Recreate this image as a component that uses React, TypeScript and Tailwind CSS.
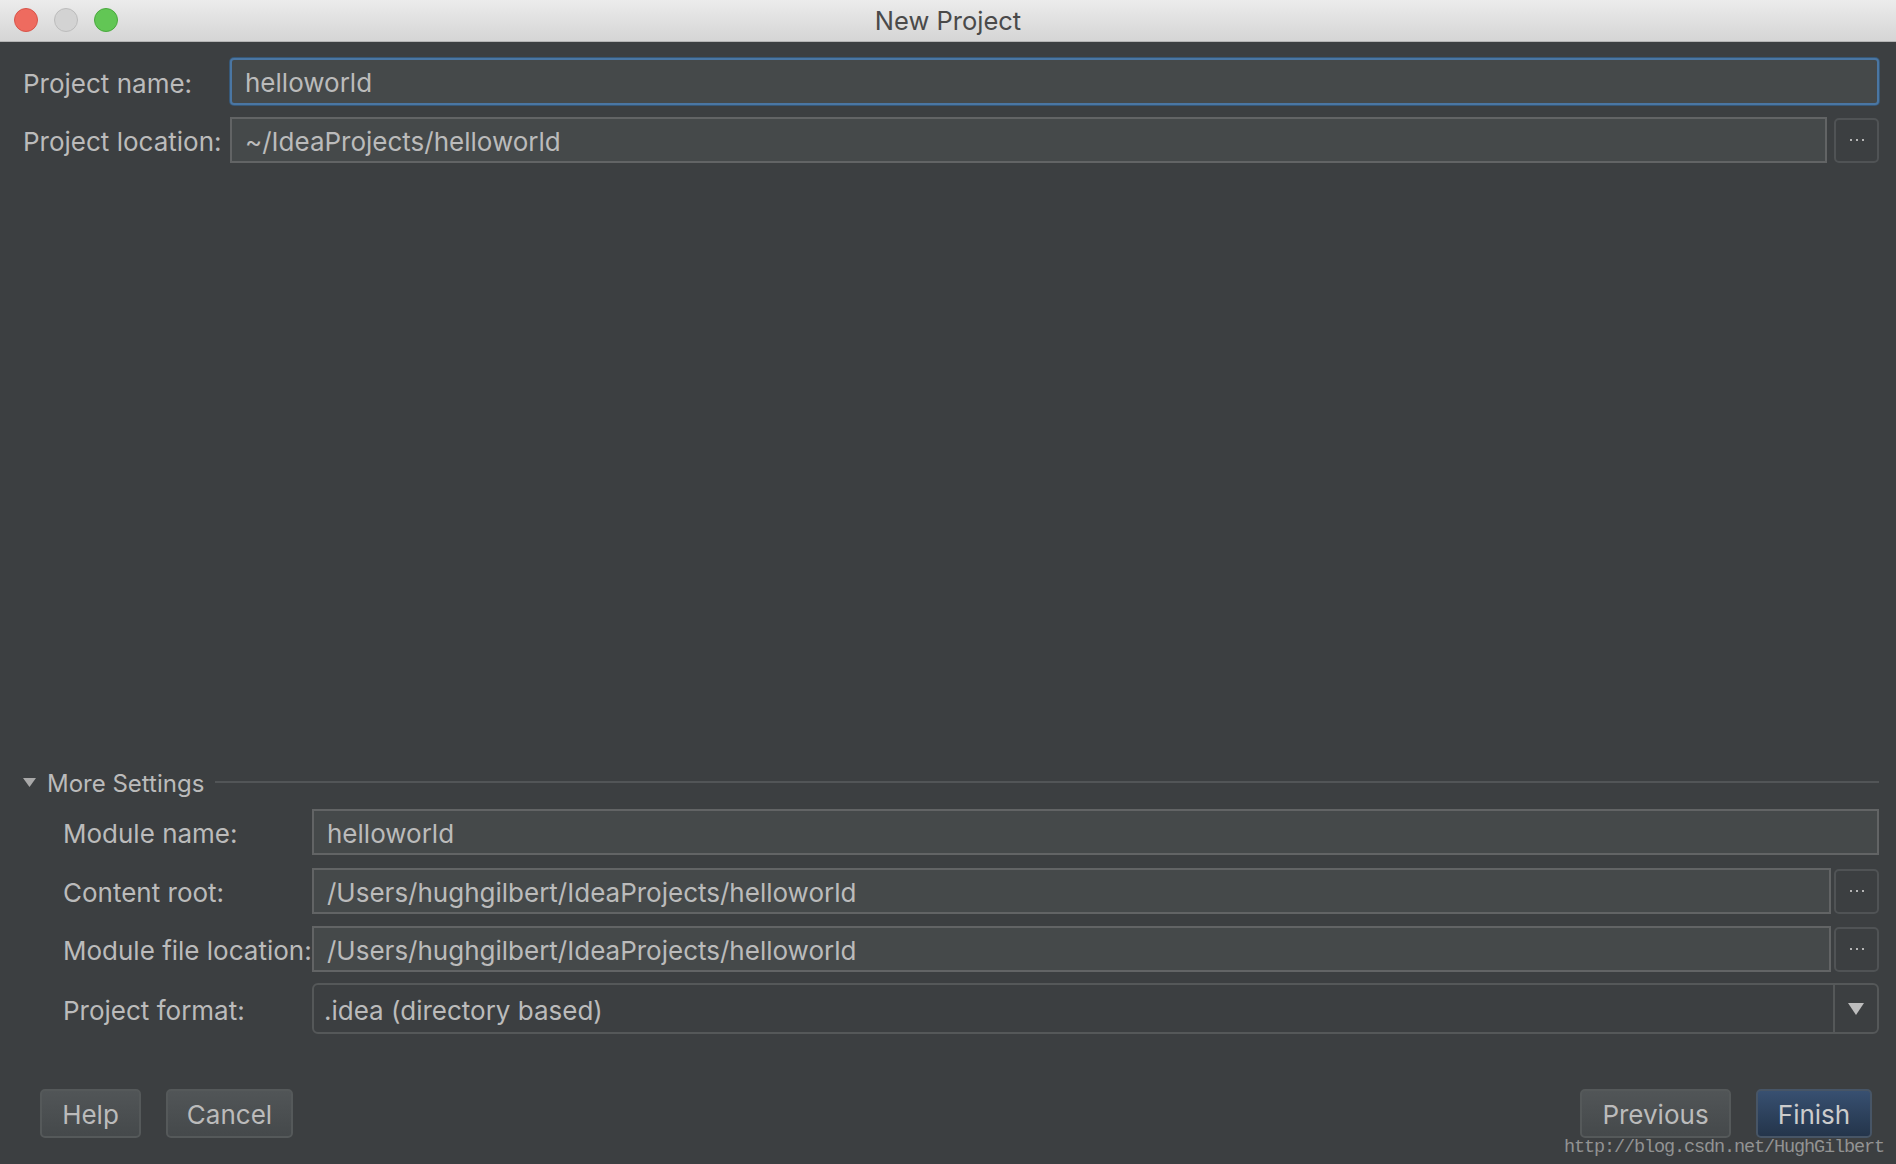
import React from "react";

const font = { fontFamily: "Inter, 'Noto Sans', sans-serif" };

function Dots() {
  return (
    <div className="flex items-center gap-[4px]">
      <span className="h-[2px] w-[2px] bg-[#b5b5b5]" />
      <span className="h-[2px] w-[2px] bg-[#b5b5b5]" />
      <span className="h-[2px] w-[2px] bg-[#b5b5b5]" />
    </div>
  );
}

function BrowseButton() {
  return (
    <div className="flex h-[45px] w-[45px] shrink-0 items-center justify-center rounded-[5px] border-2 border-[#505355] bg-[#3c3f41]">
      <Dots />
    </div>
  );
}

function TextField({ value, focused = false, pad = "pl-[13px]" }: { value: string; focused?: boolean; pad?: string }) {
  return (
    <div
      className={
        focused
          ? `flex h-full flex-1 items-center rounded-[4px] border-2 border-[#4a76a3] bg-[#45494a] shadow-[0_0_0_1px_#365878] ${pad}`
          : `flex h-full flex-1 items-center border-2 border-[#626465] bg-[#45494a] ${pad}`
      }
    >
      <span className="pt-[3px] text-[26px] leading-none text-[#bbbbbb]">{value}</span>
    </div>
  );
}

function Btn({ label, primary = false, w }: { label: string; primary?: boolean; w: string }) {
  return (
    <div
      className={
        primary
          ? `flex h-[49px] ${w} items-center justify-center rounded-[5px] border-2 border-[#475566] bg-gradient-to-b from-[#385071] to-[#24354b] pt-[2px] text-[26px] text-[#cccccc]`
          : `flex h-[49px] ${w} items-center justify-center rounded-[5px] border-2 border-[#55595a] bg-gradient-to-b from-[#515557] to-[#45494b] pt-[2px] text-[26px] text-[#bbbbbb]`
      }
    >
      {label}
    </div>
  );
}

export default function App() {
  return (
    <div className="flex h-[1164px] w-[1896px] flex-col overflow-hidden bg-[#3c3f41]" style={font}>
      {/* title bar */}
      <div className="relative flex h-[42px] shrink-0 items-center justify-center border-b border-[#b4b4b4] bg-gradient-to-b from-[#ececec] to-[#d5d5d5]">
        <div className="absolute left-[14px] top-[8px] flex gap-[16px]">
          <span className="h-[24px] w-[24px] rounded-full border border-[#d8544a] bg-[#ee6b5f]" />
          <span className="h-[24px] w-[24px] rounded-full border border-[#bcbcbc] bg-[#d3d3d3]" />
          <span className="h-[24px] w-[24px] rounded-full border border-[#4aa93e] bg-[#62c655]" />
        </div>
        <span className="pt-[2px] text-[25.5px] text-[#4a4a4a]">New Project</span>
      </div>

      <div className="flex flex-1 flex-col pl-[23px] pr-[17px] pt-[16px]">
        <div className="flex h-[47px] items-center">
          <div className="w-[207px] pt-[3px] text-[26px] text-[#bbbbbb]">Project name:</div>
          <TextField value="helloworld" focused pad="pl-[13px]" />
        </div>
        <div className="mt-[12px] flex h-[46px] items-center">
          <div className="w-[207px] pt-[3px] text-[26px] text-[#bbbbbb]">Project location:</div>
          <TextField value="~/IdeaProjects/helloworld" />
          <div className="ml-[7px]">
            <BrowseButton />
          </div>
        </div>

        <div className="flex-1" />

        {/* More settings */}
        <div className="flex h-[26px] items-center">
          <svg width="13" height="9" viewBox="0 0 13 9" className="mr-[11px]">
            <polygon points="0,0 13,0 6.5,9" fill="#a9a9a9" />
          </svg>
          <span className="pt-[3px] text-[24px] text-[#bbbbbb]">More Settings</span>
          <div className="ml-[11px] h-[2px] flex-1 bg-[#525557]" />
        </div>

        <div className="ml-[40px] mt-[14px] flex flex-col">
          <div className="flex h-[46px] items-center">
            <div className="w-[249px] pt-[3px] text-[26px] text-[#bbbbbb]">Module name:</div>
            <TextField value="helloworld" />
          </div>
          <div className="mt-[13px] flex h-[46px] items-center">
            <div className="w-[249px] pt-[3px] text-[26px] text-[#bbbbbb]">Content root:</div>
            <TextField value="/Users/hughgilbert/IdeaProjects/helloworld" />
            <div className="ml-[3px]">
              <BrowseButton />
            </div>
          </div>
          <div className="mt-[12px] flex h-[46px] items-center">
            <div className="w-[249px] pt-[3px] text-[26px] text-[#bbbbbb]">Module file location:</div>
            <TextField value="/Users/hughgilbert/IdeaProjects/helloworld" />
            <div className="ml-[3px]">
              <BrowseButton />
            </div>
          </div>
          <div className="mt-[11px] flex h-[51px] items-center">
            <div className="w-[249px] pt-[3px] text-[26px] text-[#bbbbbb]">Project format:</div>
            <div className="flex h-full flex-1 items-stretch rounded-[6px] border-2 border-[#555859] bg-[#3c3f41]">
              <div className="flex flex-1 items-center pl-[10px] pt-[3px] text-[26px] text-[#bbbbbb]">.idea (directory based)</div>
              <div className="flex w-[44px] items-center justify-center border-l-2 border-[#555859]">
                <svg width="16" height="12" viewBox="0 0 16 12">
                  <polygon points="0,0 16,0 8,12" fill="#bdbdbd" />
                </svg>
              </div>
            </div>
          </div>
        </div>

        {/* buttons */}
        <div className="mb-[26px] mt-[55px] flex items-center pl-[17px] pr-[7px]">
          <Btn label="Help" w="w-[101px]" />
          <div className="ml-[25px]">
            <Btn label="Cancel" w="w-[127px]" />
          </div>
          <div className="flex-1" />
          <Btn label="Previous" w="w-[151px]" />
          <div className="ml-[25px]">
            <Btn label="Finish" primary w="w-[116px]" />
          </div>
        </div>
      </div>

      <div
        className="pointer-events-none absolute left-[1564px] top-[1139px] text-[18.5px] leading-none tracking-[-1.1px] text-[#a8a8a8] opacity-80"
        style={{ fontFamily: "'Liberation Mono', monospace" }}
      >
        http://blog.csdn.net/HughGilbert
      </div>
    </div>
  );
}
